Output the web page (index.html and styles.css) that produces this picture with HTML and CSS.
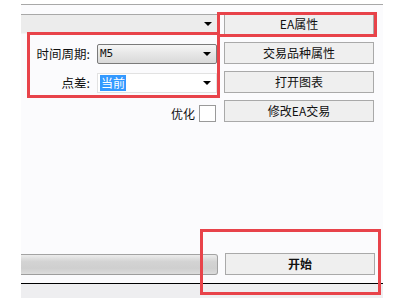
FILE: index.html
```html
<!DOCTYPE html>
<html lang="zh-CN">
<head>
    <meta charset="UTF-8">
    <title>策略测试</title>
    <link rel="stylesheet" href="styles.css">
</head>
<body>
    <div class="tester">
        <div class="settings">
            <div class="combo combo-wide"><span class="arrow"></span></div>
            <button class="btn">EA属性</button>

            <div class="field">
                <label>时间周期:</label>
                <div class="combo combo-raised"><span class="value mono">M5</span><span class="arrow"></span></div>
            </div>
            <button class="btn">交易品种属性</button>

            <div class="field">
                <label>点差:</label>
                <div class="combo"><span class="value selected">当前</span><span class="arrow"></span></div>
            </div>
            <button class="btn">打开图表</button>

            <div class="optimize">
                <span>优化</span>
                <span class="check"></span>
            </div>
            <button class="btn">修改EA交易</button>
        </div>

        <div class="run-row">
            <div class="progress"></div>
            <button class="btn btn-start">开始</button>
        </div>

        <div class="tabs"></div>
    </div>

    <!-- annotation boxes -->
    <div class="mark mark-fields"></div>
    <div class="mark mark-ea"></div>
    <div class="mark mark-start"></div>
</body>
</html>
```

FILE: styles.css
```css
body {
    margin: 0;
    background: #fff;
    font-family: "Noto Sans CJK SC", "DejaVu Sans", sans-serif;
    font-size: 12px;
    color: #111;
    width: 410px;
    height: 298px;
    overflow: hidden;
    position: relative;
}

.tester {
    margin: 4px 0 0 21px;
    width: 362px;
    height: 293px;
    border-top: 1px solid #a8a8a8;
    background: #fbfbfd;
    display: flex;
    flex-direction: column;
}

.settings {
    display: grid;
    grid-template-columns: 196px 150px;
    grid-auto-rows: 22px;
    column-gap: 7px;
    row-gap: 7px;
    padding-top: 8px;
}

.btn {
    font-family: inherit;
    font-size: 12px;
    color: #111;
    background: #efefef;
    border: 1px solid #a9a9a9;
    border-radius: 0;
    padding: 0;
    height: 22px;
    line-height: 20px;
}

.field {
    display: flex;
    align-items: center;
    gap: 7px;
}

.field label {
    width: 69px;
    text-align: right;
    font-size: 12.5px;
}

.combo {
    position: relative;
    height: 18px;
    margin-top: 1px;
    flex: 1;
    background: #fff;
    border: 1px solid #e2e2e2;
    display: flex;
    align-items: center;
}

.combo-wide {
    background: #ececec;
    border: none;
    border-top: 1px solid #a8a8a8;
    border-bottom: 1px solid #f4f4f4;
}

.combo-raised {
    border: 1px solid #7a7a7a;
    border-radius: 2px;
    background: linear-gradient(#f6f6f6, #e6e6e6 50%, #d9d9d9);
}

.value {
    margin-left: 2px;
    line-height: 16px;
}

.mono {
    font-family: "DejaVu Sans Mono", monospace;
    font-size: 11px;
}

.selected {
    background: #3399ff;
    color: #fff;
    padding: 0 1px;
}

.arrow {
    position: absolute;
    right: 5px;
    top: 7px;
    width: 0;
    height: 0;
    border-left: 4px solid transparent;
    border-right: 4px solid transparent;
    border-top: 4px solid #000;
}

.optimize {
    display: flex;
    justify-content: flex-end;
    align-items: flex-end;
    gap: 4px;
    padding-right: 1px;
}

.check {
    width: 15px;
    height: 15px;
    background: #fff;
    border: 1px solid #9a9a9a;
}

.run-row {
    margin-top: auto;
    display: flex;
    gap: 7px;
    align-items: center;
}

.progress {
    width: 196px;
    height: 19px;
    border-top: 1px solid #a3a3a3;
    border-bottom: 1px solid #9d9d9d;
    border-right: 1px solid #a0a0a0;
    border-radius: 0 3px 3px 0;
    background: linear-gradient(#ececec, #d3d3d3 35%, #cfcfcf 70%, #dcdcdc);
}

.btn-start {
    width: 150px;
    font-weight: bold;
}

.tabs {
    margin-top: 8px;
    height: 14px;
    border-top: 1px solid #000;
    background: #eeeef0;
}

.mark {
    position: absolute;
    border: 3px solid #e8434a;
    box-sizing: border-box;
}

.mark-fields {
    left: 27px;
    top: 32px;
    width: 193px;
    height: 66px;
}

.mark-ea {
    left: 217px;
    top: 12px;
    width: 160px;
    height: 25px;
}

.mark-start {
    left: 200px;
    top: 229px;
    width: 181px;
    height: 66px;
}
```
